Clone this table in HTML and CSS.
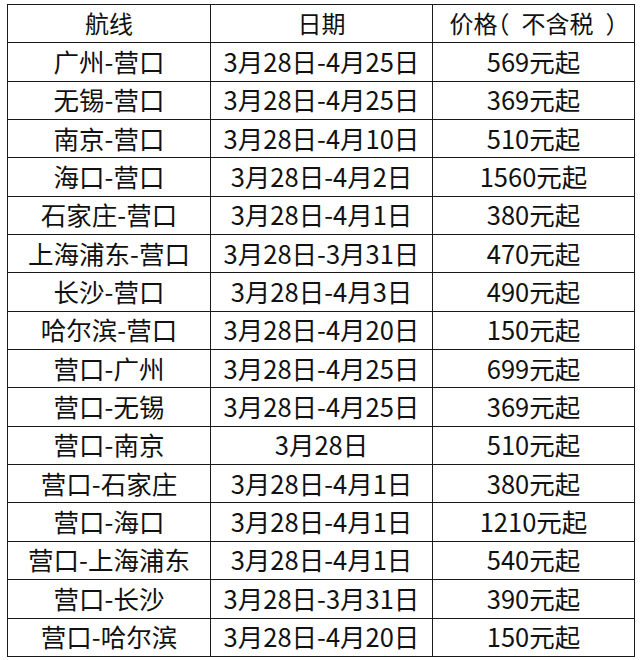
FILE: index.html
```html
<!DOCTYPE html>
<html lang="zh">
<head>
<meta charset="utf-8">
<link rel="stylesheet" href="styles.css">
</head>
<body>
<table class="fares">
  <colgroup><col class="c1"><col class="c2"><col class="c3"></colgroup>
  <tr class="head"><td>航线</td><td>日期</td><td>价格<span class="po">（</span>不含税<span class="pc">）</span></td></tr>
  <tr><td>广州-营口</td><td>3月28日-4月25日</td><td>569元起</td></tr>
  <tr><td>无锡-营口</td><td>3月28日-4月25日</td><td>369元起</td></tr>
  <tr><td>南京-营口</td><td>3月28日-4月10日</td><td>510元起</td></tr>
  <tr><td>海口-营口</td><td>3月28日-4月2日</td><td>1560元起</td></tr>
  <tr><td>石家庄-营口</td><td>3月28日-4月1日</td><td>380元起</td></tr>
  <tr><td>上海浦东-营口</td><td>3月28日-3月31日</td><td>470元起</td></tr>
  <tr><td>长沙-营口</td><td>3月28日-4月3日</td><td>490元起</td></tr>
  <tr><td>哈尔滨-营口</td><td>3月28日-4月20日</td><td>150元起</td></tr>
  <tr><td>营口-广州</td><td>3月28日-4月25日</td><td>699元起</td></tr>
  <tr><td>营口-无锡</td><td>3月28日-4月25日</td><td>369元起</td></tr>
  <tr><td>营口-南京</td><td>3月28日</td><td>510元起</td></tr>
  <tr><td>营口-石家庄</td><td>3月28日-4月1日</td><td>380元起</td></tr>
  <tr><td>营口-海口</td><td>3月28日-4月1日</td><td>1210元起</td></tr>
  <tr><td>营口-上海浦东</td><td>3月28日-4月1日</td><td>540元起</td></tr>
  <tr><td>营口-长沙</td><td>3月28日-3月31日</td><td>390元起</td></tr>
  <tr><td>营口-哈尔滨</td><td>3月28日-4月20日</td><td>150元起</td></tr>
</table>
</body>
</html>
```
FILE: styles.css
```css
html, body {
  margin: 0;
  padding: 0;
  background: #ffffff;
}
body {
  padding: 4px 0 0 7px;
  font-family: "Noto Sans CJK SC", "Noto Sans", sans-serif;
  color: #111111;
}
.fares {
  border-collapse: collapse;
  table-layout: fixed;
  width: 627px;
}
.c1 { width: 203px; }
.c2 { width: 222px; }
.c3 { width: 202px; }
.fares td {
  border: 1.5px solid #1a1a1a;
  height: 38.35px;
  padding: 0 0 2px 0;
  box-sizing: border-box;
  text-align: center;
  vertical-align: middle;
  font-size: 25.5px;
  line-height: 28px;
  white-space: nowrap;
}
.head td {
  font-size: 24px;
}
.po,
.pc {
  font-feature-settings: "halt" 1;
}
.po {
  margin-right: 12px;
}
.pc {
  margin-left: 12px;
}
```
